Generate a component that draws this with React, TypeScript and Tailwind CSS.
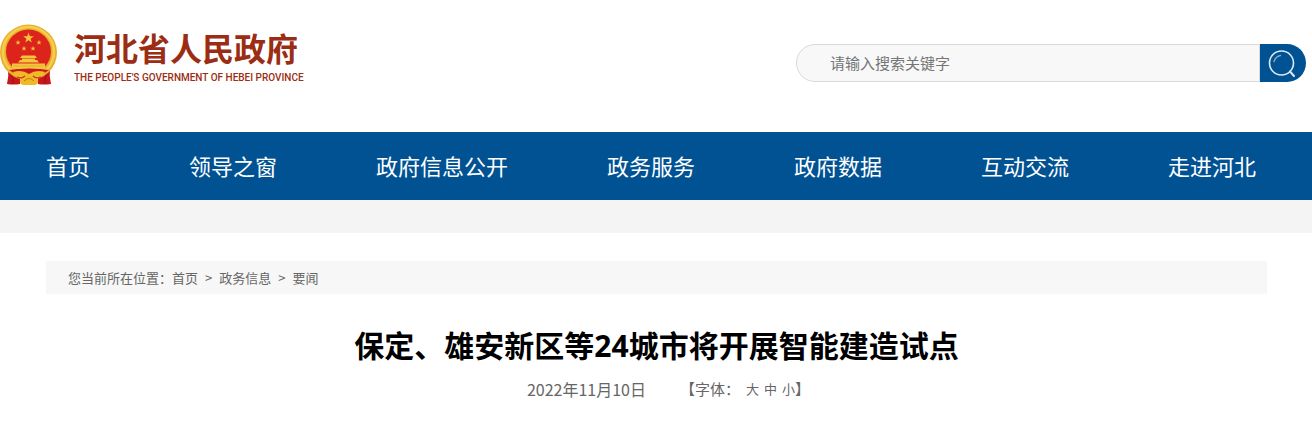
import { FormEvent, useState } from "react";

const navItems = ["首页", "领导之窗", "政府信息公开", "政务服务", "政府数据", "互动交流", "走进河北"];

const breadcrumbs = ["首页", "政务信息", "要闻"];

const fontSizes = ["大", "中", "小"];

const STAR = "M0 -1 L0.225 -0.309 L0.951 -0.309 L0.363 0.118 L0.588 0.809 L0 0.382 L-0.588 0.809 L-0.363 0.118 L-0.951 -0.309 L-0.225 -0.309 Z";

function Emblem() {
  return (
    <svg viewBox="0 0 58 62" className="h-[62px] w-[58px] shrink-0" aria-hidden="true">
      {/* ribbon tails */}
      <path d="M8 43 L20 50 L20 60 Q14 61 7 60 Q9 52 8 43Z" fill="#c8161d" />
      <path d="M50 43 L38 50 L38 60 Q44 61 51 60 Q49 52 50 43Z" fill="#c8161d" />
      <path d="M11 49 Q14 54 13 60 M47 49 Q44 54 45 60" stroke="#8f1014" strokeWidth="0.8" fill="none" />
      {/* wreath */}
      <ellipse cx="28.5" cy="28.5" rx="28.5" ry="28" fill="#e8b02a" />
      <ellipse cx="28.5" cy="28" rx="25.5" ry="25" fill="none" stroke="#f5cd50" strokeWidth="2.5" />
      <ellipse cx="28.5" cy="27.5" rx="22.5" ry="22" fill="#dc241c" />
      <path d={STAR} transform="translate(28.5 14) scale(5.6)" fill="#f8c63a" />
      <path d={STAR} transform="translate(18 18.5) scale(2.8)" fill="#f8c63a" />
      <path d={STAR} transform="translate(39 18.5) scale(2.8)" fill="#f8c63a" />
      <path d={STAR} transform="translate(24 24.5) scale(2.8)" fill="#f8c63a" />
      <path d={STAR} transform="translate(33 24.5) scale(2.8)" fill="#f8c63a" />
      {/* gate tower */}
      <path d="M20 34 L22 31.5 H35 L37 34Z M22 34.5 H35 V36 H22Z M18 38.5 L20 36 H37 L39 38.5Z M12 39.5 H45 V45 H12Z" fill="#f4c63c" />
      <path d="M13 42 H44" stroke="#dda327" strokeWidth="0.7" />
      <path d="M9 46 Q29 43 49 46 L43 50 H15Z" fill="#cf1a1b" />
      {/* knot and gear */}
      <path d="M13 48 Q22 45 29 50 Q36 45 45 48 Q42 54 35 52 L38 56 Q39 60 35 61 H23 Q19 60 20 56 L23 52 Q16 54 13 48Z" fill="#f0b926" />
      <path d="M17 53 Q22 55 25 52 M41 53 Q36 55 33 52" stroke="#cf3a18" strokeWidth="1.2" fill="none" />
      <path d="M24 57 Q29 52 34 57" stroke="#c8711a" strokeWidth="1" fill="none" />
    </svg>
  );
}

function SearchIcon() {
  return (
    <svg viewBox="0 0 30 30" className="size-[30px]" fill="none" stroke="#dce8f2" strokeLinecap="round" aria-hidden="true">
      <circle cx="13.5" cy="15" r="12" strokeWidth="1.6" />
      <path d="M22 23.5 L26 28" strokeWidth="2" />
      <path d="M6 13.5 Q7.5 8.5 12.5 7.5" strokeWidth="1.4" stroke="#7fa8cb" />
    </svg>
  );
}

function Header() {
  const [keyword, setKeyword] = useState("");
  const onSubmit = (e: FormEvent) => e.preventDefault();

  return (
    <header className="flex items-start justify-between gap-6 pt-6 pr-[6px] pb-[46px]">
      <a href="#" className="flex items-start gap-4 text-[#9b2d14]">
        <Emblem />
        <span className="flex flex-col">
          <span className="text-[32px] leading-[46px] font-bold whitespace-nowrap">河北省人民政府</span>
          <span className="font-[Roboto,sans-serif] text-[10px] leading-4 font-medium whitespace-nowrap">
            THE PEOPLE'S GOVERNMENT OF HEBEI PROVINCE
          </span>
        </span>
      </a>
      <form onSubmit={onSubmit} className="mt-5 flex h-[38px] w-[510px]" role="search">
        <input
          type="text"
          aria-label="搜索关键字"
          placeholder="请输入搜索关键字"
          value={keyword}
          onChange={(e) => setKeyword(e.target.value)}
          className="min-w-0 flex-1 rounded-l-full border border-[#d9d9d9] bg-[#f8f8f8] pl-[33px] text-[15px] text-[#333] placeholder:text-[#757575] focus:outline-none"
        />
        <button
          type="submit"
          aria-label="搜索"
          className="flex w-[46px] items-center justify-center rounded-r-full bg-[#005293]"
        >
          <SearchIcon />
        </button>
      </form>
    </header>
  );
}

export default function App() {
  const [size, setSize] = useState("中");

  return (
    <div className="bg-white font-['Noto_Sans_CJK_SC',sans-serif] text-[#666]">
      <Header />

      <nav className="bg-[#005293] pr-14 pl-[46px]">
        <ul className="flex justify-between">
          {navItems.map((item) => (
            <li key={item}>
              <a href="#" className="block pb-[2px] text-[22px] leading-[66px] whitespace-nowrap text-white">
                {item}
              </a>
            </li>
          ))}
        </ul>
      </nav>
      <div className="h-[33px] bg-[#f4f4f4]" />

      <main className="pt-7 pr-[45px] pb-4 pl-[46px]">
        <div className="flex bg-[#f7f7f7] px-[22px] text-[13px] leading-[33px]">
          <span>您当前所在位置：</span>
          <ol className="flex">
            {breadcrumbs.map((crumb, i) => (
              <li key={crumb}>
                {i > 0 && <span className="px-[7px]">&gt;</span>}
                <a href="#">{crumb}</a>
              </li>
            ))}
          </ol>
        </div>

        <h1 className="mt-7 text-center font-['Noto_Sans','Noto_Sans_CJK_SC',sans-serif] text-[30px] leading-12 font-bold text-black">
          保定、雄安新区等24城市将开展智能建造试点
        </h1>

        <div className="mt-[7px] flex items-center justify-center gap-[34px] pl-6 leading-6">
          <time dateTime="2022-11-10" className="text-base leading-6">
            2022年11月10日
          </time>
          <div className="flex items-center text-[15px]">
            <span>【字体：</span>
            <span className="flex gap-[5px] pl-[6px]">
              {fontSizes.map((s) => (
                <button key={s} type="button" aria-pressed={s === size} onClick={() => setSize(s)} className="text-[13px]">
                  {s}
                </button>
              ))}
            </span>
            <span>】</span>
          </div>
        </div>
      </main>
    </div>
  );
}
